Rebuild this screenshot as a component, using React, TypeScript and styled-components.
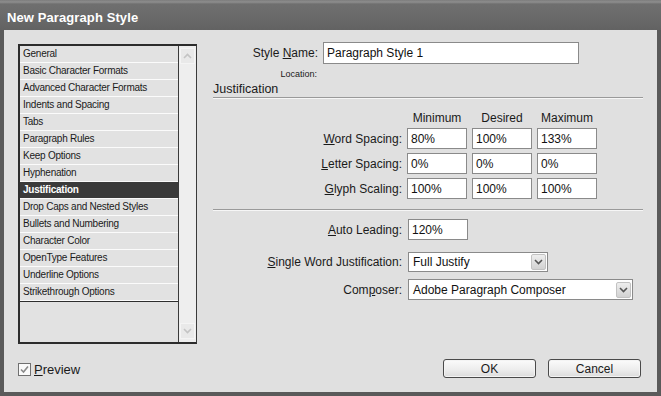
import React from 'react'
import styled, { createGlobalStyle } from 'styled-components'

const GlobalStyle = createGlobalStyle`
  html, body {
    margin: 0;
    padding: 0;
    background: #e0e0e0;
  }
  body {
    font-family: "Liberation Sans", Arial, sans-serif;
    color: #111;
  }
`

const Window = styled.div`
  width: 661px;
  height: 396px;
  display: flex;
  flex-direction: column;
  overflow: hidden;
`

const TitleBar = styled.div`
  height: 30px;
  box-sizing: border-box;
  flex-shrink: 0;
  display: flex;
  align-items: center;
  padding: 4px 0 0 7px;
  background: linear-gradient(#7c7c7c 0px, #8e8e8e 2px, #6f6f6f 4px, #686868 20px, #626262 30px);
  color: #fff;
  font-weight: bold;
  font-size: 13px;
  letter-spacing: 0.1px;
`

const Frame = styled.div`
  flex: 1;
  box-sizing: border-box;
  border: 4px solid #5a5a5a;
  border-top: none;
  background: #e0e0e0;
  padding: 12px 14px 14px 14px;
  display: grid;
  grid-template-columns: 179px 430px;
  grid-template-rows: 302px 19px;
  column-gap: 16px;
  row-gap: 15px;
`

const LeftColumn = styled.div`
  padding-top: 2px;
`

const ListBox = styled.div`
  height: 300px;
  box-sizing: border-box;
  border: 2px solid #2c2c2c;
  border-right: 1px solid #3a3a3a;
  display: flex;
  background: #e2e2e2;
`

const Items = styled.div`
  flex: 1;
  border-right: 1px solid #3a3a3a;
  display: flex;
  flex-direction: column;
`

const ItemList = styled.div`
  border-bottom: 1px solid #2e2e2e;
`

const Item = styled.div<{ $active?: boolean }>`
  height: 17px;
  box-sizing: border-box;
  border-bottom: 1px solid #fbfbfb;
  padding-left: 3px;
  font-size: 10px;
  letter-spacing: -0.25px;
  line-height: 16px;
  white-space: nowrap;
  background: ${p => (p.$active ? '#3b3b3b' : '#e2e2e2')};
  color: ${p => (p.$active ? '#fff' : '#1a1a1a')};
  font-weight: ${p => (p.$active ? 'bold' : 'normal')};
`

const ScrollBar = styled.div`
  width: 17px;
  background: #eeeeee;
  display: flex;
  flex-direction: column;
  justify-content: space-between;
  padding: 2px 1px 3px 1px;
  box-sizing: border-box;
`

const ScrollButton = styled.div`
  width: 15px;
  height: 16px;
  display: flex;
  align-items: center;
  justify-content: center;
  background: #e9e9e9;
  border: 1px solid #f4f4f4;
  box-sizing: border-box;
`

const RightColumn = styled.div`
  display: flex;
  flex-direction: column;
`

const NameRow = styled.div`
  display: flex;
  align-items: center;
  gap: 5px;
`

const Label = styled.div<{ $width: number; $size?: number }>`
  width: ${p => p.$width}px;
  text-align: right;
  font-size: ${p => p.$size || 12}px;
  white-space: nowrap;
  color: #1a1a1a;
`

const Mn = styled.span`
  text-decoration: underline;
`

const TextBox = styled.div<{ $width: number; $height?: number }>`
  width: ${p => p.$width}px;
  height: ${p => p.$height || 21}px;
  box-sizing: border-box;
  background: #fff;
  border: 1px solid #8a8a8a;
  font-size: 12px;
  padding-left: 3px;
  display: flex;
  align-items: center;
  color: #111;
`

const LocationRow = styled.div`
  margin-top: 4px;
  height: 12px;
  display: flex;
  align-items: center;
`

const SectionTitle = styled.div`
  margin-top: 1px;
  font-size: 12.5px;
  line-height: 16px;
  color: #1a1a1a;
`

const Rule = styled.div<{ $mt?: number }>`
  margin-top: ${p => p.$mt || 0}px;
  border-top: 1px solid #9a9a9a;
  border-bottom: 1px solid #f6f6f6;
`

const SpacingGrid = styled.div`
  margin-top: 12px;
  display: grid;
  grid-template-columns: 189px 60px 60px 60px;
  column-gap: 5px;
  row-gap: 4px;
  align-items: center;
`

const ColHead = styled.div`
  text-align: center;
  font-size: 12px;
  line-height: 14px;
  margin-bottom: -1px;
  color: #1a1a1a;
`

const FieldRow = styled.div<{ $mt: number }>`
  margin-top: ${p => p.$mt}px;
  display: flex;
  align-items: center;
  gap: 6px;
`

const Select = styled.div<{ $width: number; $height: number }>`
  width: ${p => p.$width}px;
  height: ${p => p.$height}px;
  box-sizing: border-box;
  background: #fff;
  border: 1px solid #8a8a8a;
  font-size: 12px;
  padding: 1px 1px 1px 4px;
  display: flex;
  align-items: center;
  justify-content: space-between;
`

const DropButton = styled.div`
  width: 15px;
  height: 16px;
  box-sizing: border-box;
  border: 1px solid #c2c2c2;
  border-radius: 2px;
  background: linear-gradient(#eeeeee, #d2d2d2);
  display: flex;
  align-items: center;
  justify-content: center;
`

const PreviewRow = styled.label`
  display: flex;
  align-items: center;
  gap: 3px;
  font-size: 13px;
  color: #1a1a1a;
  padding-top: 2px;
`

const CheckBox = styled.div`
  width: 13px;
  height: 13px;
  box-sizing: border-box;
  border: 1px solid #707070;
  background: #fafafa;
  display: flex;
  align-items: center;
  justify-content: center;
`

const ButtonRow = styled.div`
  display: flex;
  justify-content: flex-end;
  gap: 12px;
  padding-right: 2px;
`

const Button = styled.div`
  width: 93px;
  height: 19px;
  box-sizing: border-box;
  border: 1px solid #4a4a4a;
  border-radius: 3px;
  background: linear-gradient(#fbfbfb, #ececec 60%, #dcdcdc);
  box-shadow: inset 0 0 0 1px #f4f4f4;
  display: flex;
  align-items: center;
  justify-content: center;
  font-size: 12px;
  color: #1a1a1a;
`

const Chevron = ({ up, color }: { up?: boolean; color: string }) => (
  <svg width="9" height="6" viewBox="0 0 9 6">
    <polyline
      points={up ? '1,5 4.5,1.5 8,5' : '1,1 4.5,4.5 8,1'}
      fill="none"
      stroke={color}
      strokeWidth="1.6"
    />
  </svg>
)

const categories = [
  'General',
  'Basic Character Formats',
  'Advanced Character Formats',
  'Indents and Spacing',
  'Tabs',
  'Paragraph Rules',
  'Keep Options',
  'Hyphenation',
  'Justification',
  'Drop Caps and Nested Styles',
  'Bullets and Numbering',
  'Character Color',
  'OpenType Features',
  'Underline Options',
  'Strikethrough Options',
]

const spacingRows: { label: React.ReactNode; values: string[] }[] = [
  { label: <><Mn>W</Mn>ord Spacing:</>, values: ['80%', '100%', '133%'] },
  { label: <><Mn>L</Mn>etter Spacing:</>, values: ['0%', '0%', '0%'] },
  { label: <><Mn>G</Mn>lyph Scaling:</>, values: ['100%', '100%', '100%'] },
]

export default function App() {
  return (
    <>
      <GlobalStyle />
      <Window>
        <TitleBar>New Paragraph Style</TitleBar>
        <Frame>
          <LeftColumn>
            <ListBox>
              <Items>
                <ItemList>
                  {categories.map(c => (
                    <Item key={c} $active={c === 'Justification'}>
                      {c}
                    </Item>
                  ))}
                </ItemList>
              </Items>
              <ScrollBar>
                <ScrollButton>
                  <Chevron up color="#c4c4c4" />
                </ScrollButton>
                <ScrollButton>
                  <Chevron color="#c4c4c4" />
                </ScrollButton>
              </ScrollBar>
            </ListBox>
          </LeftColumn>

          <RightColumn>
            <NameRow>
              <Label $width={105}>
                Style <Mn>N</Mn>ame:
              </Label>
              <TextBox $width={256} $height={22}>Paragraph Style 1</TextBox>
            </NameRow>
            <LocationRow>
              <Label $width={104} $size={9}>
                Location:
              </Label>
            </LocationRow>
            <SectionTitle>Justification</SectionTitle>
            <Rule />
            <SpacingGrid>
              <div />
              <ColHead>Minimum</ColHead>
              <ColHead>Desired</ColHead>
              <ColHead>Maximum</ColHead>
              {spacingRows.map((r, i) => (
                <React.Fragment key={i}>
                  <Label $width={189}>{r.label}</Label>
                  {r.values.map((v, j) => (
                    <TextBox key={j} $width={60}>
                      {v}
                    </TextBox>
                  ))}
                </React.Fragment>
              ))}
            </SpacingGrid>
            <Rule $mt={10} />
            <FieldRow $mt={8}>
              <Label $width={189}>
                <Mn>A</Mn>uto Leading:
              </Label>
              <TextBox $width={60}>120%</TextBox>
            </FieldRow>
            <FieldRow $mt={12}>
              <Label $width={189}>
                <Mn>S</Mn>ingle Word Justification:
              </Label>
              <Select $width={140} $height={20}>
                Full Justify
                <DropButton>
                  <Chevron color="#555" />
                </DropButton>
              </Select>
            </FieldRow>
            <FieldRow $mt={7}>
              <Label $width={189}>
                Com<Mn>p</Mn>oser:
              </Label>
              <Select $width={225} $height={21}>
                Adobe Paragraph Composer
                <DropButton>
                  <Chevron color="#555" />
                </DropButton>
              </Select>
            </FieldRow>
          </RightColumn>

          <PreviewRow>
            <CheckBox>
              <svg width="9" height="9" viewBox="0 0 9 9">
                <polyline points="1,4.5 3.5,7 8,1.5" fill="none" stroke="#8a8a8a" strokeWidth="1.6" />
              </svg>
            </CheckBox>
            <span>
              <Mn>P</Mn>review
            </span>
          </PreviewRow>
          <ButtonRow>
            <Button>OK</Button>
            <Button>Cancel</Button>
          </ButtonRow>
        </Frame>
      </Window>
    </>
  )
}
